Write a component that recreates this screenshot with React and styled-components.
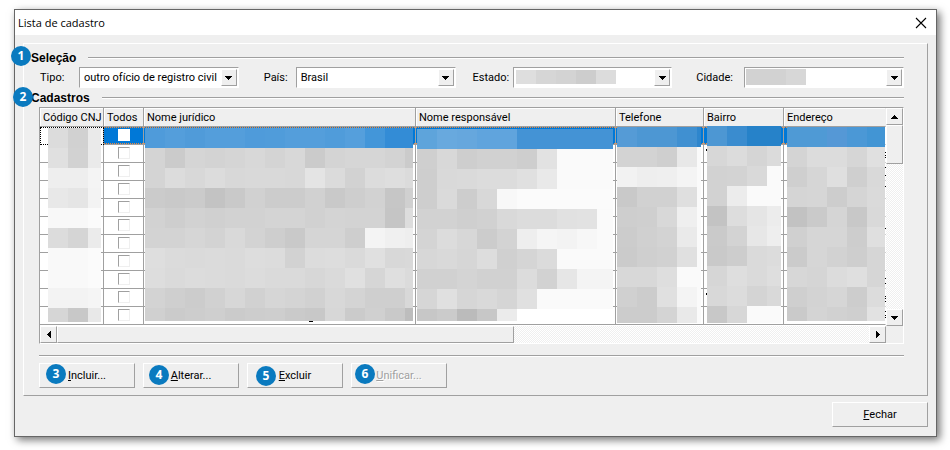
import React from "react";
import styled, { createGlobalStyle, css } from "styled-components";

const FACE = "#efefef";
const SHADE = "#a0a0a0";
const LIGHT = "#ffffff";
const ACCENT = "#0078d7";

const GlobalStyle = createGlobalStyle`
  *, *::before, *::after { box-sizing: border-box; }
  body {
    margin: 0;
    background: #fff;
    color: #000;
    font: 11px/14px Roboto, "Liberation Sans", sans-serif;
  }
  button, select, input { font: inherit; color: inherit; margin: 0; }
`;

const raised = css`
  border: 1px solid;
  border-color: ${LIGHT} ${SHADE} ${SHADE} ${LIGHT};
  background: ${FACE};
`;

const sunken = css`
  border: 1px solid;
  border-color: ${SHADE} ${LIGHT} ${LIGHT} ${SHADE};
`;

const Window = styled.main`
  margin: 9px 13px 13px 14px;
  border: 1px solid #666;
  background: ${FACE};
  box-shadow: 3px 3px 8px rgba(0, 0, 0, 0.55);
`;

const TitleBar = styled.header`
  display: flex;
  justify-content: space-between;
  align-items: center;
  height: 25px;
  padding: 0 8px 0 3px;
  background: #fff;
`;

const Title = styled.h1`
  margin: 0;
  font: 11px/16px "Open Sans", "Noto Sans", sans-serif;
`;

const CloseButton = styled.button`
  display: flex;
  padding: 1px;
  border: 0;
  background: none;
`;

const Body = styled.div`
  padding: 8px 8px 9px;
`;

const Panel = styled.section`
  ${raised}
  padding: 7px 23px 7px 7px;
`;

const GroupHead = styled.div`
  position: relative;
  display: flex;
  align-items: center;
  gap: 12px;
  height: 14px;
  margin-top: ${(p) => p.$top || 0}px;
`;

const GroupTitle = styled.h2`
  margin: 0;
  font: bold 12px/14px "Liberation Sans", sans-serif;
`;

const Rule = styled.hr`
  flex: 1;
  height: 2px;
  margin: 0;
  border: 0;
  border-top: 1px solid ${SHADE};
  border-bottom: 1px solid ${LIGHT};
`;

const Content = styled.div`
  margin: 2px 0 0 8px;
`;

const Filters = styled.form`
  display: grid;
  grid-template-columns: 40px 1fr 57px 1fr 57px 1fr 72px 1fr;
  align-items: center;
`;

const FilterLabel = styled.label`
  padding-left: ${(p) => p.$indent}px;
`;

const Combo = styled.div`
  ${sunken}
  position: relative;
  height: 21px;
  background: #fff;
`;

const ComboSelect = styled.select`
  display: block;
  width: 100%;
  height: 19px;
  padding: 0 18px 0 4px;
  border: 0;
  appearance: none;
  background: transparent;
  outline: 0;
`;

const ComboArrow = styled.span`
  ${raised}
  position: absolute;
  top: 1px;
  right: 1px;
  width: 16px;
  height: 17px;
  display: grid;
  place-items: center;
  pointer-events: none;
`;

const Mosaic = styled.svg`
  position: absolute;
  z-index: 1;
  left: ${(p) => p.$x}px;
  top: ${(p) => p.$y}px;
  overflow: visible;
  pointer-events: none;
`;

const Listing = styled.div`
  ${sunken}
  display: grid;
  grid-template-columns: minmax(0, 1fr) 17px;
  grid-template-rows: auto 17px;
`;

const Viewport = styled.div`
  overflow: hidden;
  padding-bottom: 1px;
  background: #fff;
`;

const Table = styled.table`
  width: 100%;
  table-layout: fixed;
  border-collapse: separate;
  border-spacing: 0;
`;

const Col = styled.col`
  width: ${(p) => (p.$w ? `${p.$w}px` : "auto")};
`;

const HeadCell = styled.th`
  height: 19px;
  padding: 1px 0 0 3px;
  border-bottom: 1px solid ${SHADE};
  border-right: 1px solid ${(p) => (p.$last ? FACE : SHADE)};
  box-shadow: inset 1px 1px ${LIGHT};
  background: ${FACE};
  font-weight: normal;
  text-align: left;
  white-space: nowrap;
`;

const dots = (a, b) =>
  `repeating-linear-gradient(90deg, ${a} 0 1px, ${b} 1px 2px)`;

const Cell = styled.td`
  height: 18px;
  padding: 2px 0 0;
  vertical-align: top;
  border-bottom: 1px solid ${SHADE};
  border-right: 1px solid ${(p) => (p.$last ? "#fff" : SHADE)};
  text-align: center;
  ${(p) => p.$selected && css`
    position: relative;
    background: ${dots("#f08a3c", ACCENT)} top / 100% 1px no-repeat,
      ${dots("#f08a3c", ACCENT)} bottom / 100% 1px no-repeat, ${ACCENT};
  `}
  ${(p) => p.$focused && css`
    background: #fff;
    border-bottom-color: #fff;
    outline: 1px dotted #000;
    outline-offset: -1px;
  `}
`;

const Tick = styled.input.attrs({ type: "checkbox" })`
  ${sunken}
  display: block;
  width: 12px;
  height: 12px;
  margin: 0 auto;
  appearance: none;
  background: #fff;
  border-color: ${(p) => (p.$lit ? "#fff" : `${SHADE} ${FACE} ${FACE} ${SHADE}`)};
`;

const ScrollBar = styled.div`
  display: flex;
  flex-direction: ${(p) => (p.$vertical ? "column" : "row")};
  background: repeating-conic-gradient(#efefef 0 25%, #fff 0 50%) 0 0 / 2px 2px;
`;

const ScrollButton = styled.button`
  ${raised}
  flex: none;
  display: grid;
  place-items: center;
  width: 17px;
  height: 17px;
  padding: 0;
`;

const Thumb = styled.div`
  ${raised}
  flex: 0 0 ${(p) => p.$size};
`;

const Track = styled.div`
  flex: 1;
`;

const Separator = styled(Rule)`
  margin-top: 11px;
`;

const Actions = styled.div`
  display: flex;
  gap: 8px;
  margin-top: 6px;
`;

const PushButton = styled.button`
  ${raised}
  position: relative;
  width: 96px;
  height: 25px;
  padding: 1px 0 0;
  &:disabled {
    color: #a0a0a0;
    text-shadow: 1px 1px #fff;
  }
`;

const Footer = styled.footer`
  display: flex;
  justify-content: flex-end;
  margin-top: 6px;
`;

const Badge = styled.span`
  position: absolute;
  z-index: 2;
  left: ${(p) => p.$x}px;
  top: ${(p) => p.$y}px;
  width: 20px;
  height: 20px;
  border-radius: 50%;
  background: #0a7abf;
  color: #fff;
  font: bold 12px/20px "Open Sans", "Noto Sans", sans-serif;
  text-align: center;
  text-shadow: none;
`;

const ARROWS = {
  down: [7, 4, "M0 0h7v1h-1v1h-1v1h-1v1h-1v-1h-1v-1h-1v-1h-1z"],
  up: [7, 4, "M3 0h1v1h1v1h1v1h1v1h-7v-1h1v-1h1v-1h1z"],
  left: [4, 7, "M3 0h1v7h-1v-1h-1v-1h-1v-1h-1v-1h1v-1h1v-1h1z"],
  right: [4, 7, "M0 0h1v1h1v1h1v1h1v1h-1v1h-1v1h-1v1h-1z"],
};

function Arrow({ dir }) {
  const [w, h, d] = ARROWS[dir];
  return (
    <svg width={w} height={h} shapeRendering="crispEdges" aria-hidden="true">
      <path d={d} />
    </svg>
  );
}

// Tiles are 20px squares; `first` and `total` give the top row and overall heights.
function Tiles({ x, y, width, total, blue, rows, first = 20, specks = [] }) {
  const parse = (line) => line.split(" ").map((v) => (v.length === 2 ? `#${v}${v}${v}` : `#${v}`));
  const lines = (blue ? [blue, ...rows] : rows).map(parse);
  return (
    <Mosaic $x={x} $y={y} width={width} height={total} shapeRendering="crispEdges" aria-hidden="true">
      {lines.map((line, r) => {
        const top = r === 0 ? 0 : first + (r - 1) * 20;
        const bottom = Math.min(total, first + r * 20);
        return line.map((fill, c) => (
          <rect
            key={`${r}-${c}`}
            x={c * 20}
            y={top}
            width={Math.min(20, width - c * 20)}
            height={bottom - top}
            fill={fill}
          />
        ));
      })}
      {specks.map(([sx, sy, w, h]) => (
        <rect key={`s${sx}-${sy}`} x={sx} y={sy} width={w} height={h} fill="#000" />
      ))}
    </Mosaic>
  );
}

const COLUMNS = [
  {
    name: "Código CNJ", w: 64,
    tiles: {
      x: 8, y: 1, width: 53, total: 194,
      rows: ["dc d1 ea", "e0 d2 ea", "ee ee f4", "e8 e5 f3", "f8 f8 fb", "dc d5 eb",
        "f9 f9 fb", "f9 f9 fb", "f3 f3 f5", "d6 c8 e8"],
    },
  },
  { name: "Todos", w: 40 },
  {
    name: "Nome jurídico", w: 272,
    tiles: {
      x: 1, y: 1, width: 268, total: 193,
      blue: "4f9bda 549edb 509bd9 549edb 549edb 4f9bda 509cda 549edb 549edb 509cda 559fdc 4396d9 338cd6 338cd6",
      rows: [
        "d4 cb d5 d3 d5 d8 d4 d8 cb d4 d6 d6 d3 cb",
        "d4 dc d8 dc d8 d9 d9 d8 e4 db d2 dc de db",
        "cb c9 cb c3 c9 d1 cc cc d1 c9 ce d2 c6 d0",
        "d2 ce d2 d0 d2 d2 d4 d4 d1 d4 d3 d3 c5 dd",
        "d3 d3 d6 d3 d9 d3 ce c9 d5 d5 ce f4 f0 ee",
        "de db da db da dd dc d2 dc dd da e0 d8 d9",
        "dd da dc db da dc da da d7 da e0 d6 df db",
        "d3 cf cc d1 d7 d1 d6 d4 d1 d8 d4 cf cf d8",
        "d0 cb cd cf cb cd ce ca c8 d7 cb d0 c9 bd",
      ],
      specks: [[164, 193, 4, 1]],
    },
  },
  {
    name: "Nome responsável", w: 200,
    tiles: {
      x: 1, y: 2, width: 196, total: 192,
      blue: "5ea4db 68a9de 66a7dd 60a4dd 60a4dd 4493d5 4493d5 4493d5 4493d5 4493d5",
      rows: [
        "cf d8 ce d1 d1 ce e2 fa fa fa",
        "ce d9 da dc dc e0 e9 fa fa fa",
        "ce da cd d8 f8 fb fb fb fb fb",
        "d2 d2 cf d1 d9 dc dc e1 e2 fa",
        "d4 dc d7 cc d3 ee f5 f3 f7 fa",
        "d7 d9 d6 dd d0 d5 db fa fa fa",
        "d1 d1 d4 d1 d1 dc d2 e6 f4 f4",
        "d6 e0 d6 d9 d5 e0 fa fa fa fa",
        "c7 cb bb c7 eb ff ff ff ff ff",
      ],
    },
  },
  {
    name: "Telefone", w: 88,
    tiles: {
      x: 1, y: 0, width: 84, total: 196,
      blue: "559bd6 4d97d3 4d97d3 4090d1 2e86cd",
      rows: ["d3 d3 cf e8 fa", "f2 ee ef f4 fa", "c9 d1 d1 df fa", "ce cf d8 ef fa", "cc d0 d3 ea fa",
        "cb cf d1 e0 fa", "d8 d8 de fa fa", "d0 cc e0 f4 fa", "cc cc d4 e9 fa"],
    },
  },
  {
    name: "Bairro", w: 80,
    tiles: {
      x: 3, y: -1, width: 74, total: 197,
      blue: "4d97d3 3a8ccf 2682c9 2682c9",
      rows: ["d7 dc d5 db", "d2 d3 d9 fa", "d2 ec fa fa", "c3 dd e5 ec", "ca d3 e7 ee",
        "c9 cd da dc", "d6 de da de", "d8 dc d4 d9", "c8 d7 fa fa"],
      specks: [[-1, 23, 1, 2], [-1, 167, 1, 2]],
    },
  },
  {
    name: "Endereço",
    tiles: {
      x: 3, y: 0, width: 98, total: 194,
      blue: "4f9ad5 4f9ad5 5598d6 4b98d6 4295d4",
      rows: ["d4 dc dc d6 e0", "cf d6 df cf d9", "d5 d6 cd d5 da", "c2 ca d5 c8 d9", "d0 d6 d6 cd df",
        "cb d6 d2 ce d6", "d7 d5 dc df d6", "cf d3 d6 cd dc", "ca d4 d1 cf e2"],
      specks: [25, 28, 30, 40, 48, 59, 101, 151, 156, 169, 171, 174, 184, 188, 190].map((sy) => [98, sy, 1, 1]),
    },
  },
];

const FILTERS = [
  { id: "tipo", label: "Tipo:", value: "outro ofício de registro civil", indent: 1 },
  { id: "pais", label: "País:", value: "Brasil", indent: 25 },
  { id: "estado", label: "Estado:", value: "", indent: 17,
    tiles: { x: 2, y: 2, width: 100, total: 14, first: 14, rows: ["de d6 d3 cd dc"] } },
  { id: "cidade", label: "Cidade:", value: "", indent: 24,
    tiles: { x: 1, y: 1, width: 60, total: 16, first: 16, rows: ["d2 d2 d7"] } },
];

const ACTIONS = [
  { key: "I", rest: "ncluir...", n: 3, x: 6, y: 0 },
  { key: "A", rest: "lterar...", n: 4, x: 5, y: 1 },
  { key: "E", rest: "xcluir", n: 5, x: 8, y: 2 },
  { key: "U", rest: "nificar...", n: 6, x: 3, y: 0, disabled: true },
];

export default function App() {
  return (
    <>
      <GlobalStyle />
      <Window>
        <TitleBar>
          <Title>Lista de cadastro</Title>
          <CloseButton aria-label="Close">
            <svg width="12" height="12" viewBox="0 0 12 12" aria-hidden="true">
              <path d="M1 1l10 10M11 1L1 11" stroke="#000" strokeWidth="1.1" fill="none" />
            </svg>
          </CloseButton>
        </TitleBar>
        <Body>
          <Panel>
            <GroupHead>
              <Badge $x={-20} $y={-5}>1</Badge>
              <GroupTitle>Seleção</GroupTitle>
              <Rule />
            </GroupHead>
            <Content>
              <Filters>
                {FILTERS.map((f) => (
                  <React.Fragment key={f.id}>
                    <FilterLabel htmlFor={f.id} $indent={f.indent}>{f.label}</FilterLabel>
                    <Combo>
                      <ComboSelect id={f.id}>
                        <option>{f.value}</option>
                      </ComboSelect>
                      {f.tiles && <Tiles {...f.tiles} />}
                      <ComboArrow><Arrow dir="down" /></ComboArrow>
                    </Combo>
                  </React.Fragment>
                ))}
              </Filters>
            </Content>
            <GroupHead $top={3}>
              <Badge $x={-18} $y={-4}>2</Badge>
              <GroupTitle>Cadastros</GroupTitle>
              <Rule />
            </GroupHead>
            <Content>
              <Listing>
                <Viewport>
                  <Table>
                    <colgroup>
                      {COLUMNS.map((c) => <Col key={c.name} $w={c.w} />)}
                    </colgroup>
                    <thead>
                      <tr>
                        {COLUMNS.map((c, i) => (
                          <HeadCell key={c.name} scope="col" $last={i === 6}>{c.name}</HeadCell>
                        ))}
                      </tr>
                    </thead>
                    <tbody>
                      {Array.from({ length: 11 }, (_, r) => (
                        <tr key={r}>
                          {COLUMNS.map((c, i) => (
                            <Cell key={c.name} $selected={r === 0} $focused={r === 0 && i === 0} $last={i === 6}>
                              {i === 1 && <Tick $lit={r === 0} aria-label={`Selecionar linha ${r + 1}`} />}
                              {r === 0 && c.tiles && <Tiles {...c.tiles} />}
                            </Cell>
                          ))}
                        </tr>
                      ))}
                    </tbody>
                  </Table>
                </Viewport>
                <ScrollBar $vertical>
                  <ScrollButton aria-label="Up"><Arrow dir="up" /></ScrollButton>
                  <Thumb $size="39px" />
                  <Track />
                  <ScrollButton aria-label="Down"><Arrow dir="down" /></ScrollButton>
                </ScrollBar>
                <ScrollBar>
                  <ScrollButton aria-label="Left"><Arrow dir="left" /></ScrollButton>
                  <Thumb $size="54%" />
                  <Track />
                  <ScrollButton aria-label="Right"><Arrow dir="right" /></ScrollButton>
                </ScrollBar>
              </Listing>
              <Separator />
              <Actions>
                {ACTIONS.map((a) => (
                  <PushButton key={a.n} disabled={a.disabled}>
                    <Badge $x={a.x} $y={a.y}>{a.n}</Badge>
                    <u>{a.key}</u>{a.rest}
                  </PushButton>
                ))}
              </Actions>
            </Content>
          </Panel>
          <Footer>
            <PushButton><u>F</u>echar</PushButton>
          </Footer>
        </Body>
      </Window>
    </>
  );
}
